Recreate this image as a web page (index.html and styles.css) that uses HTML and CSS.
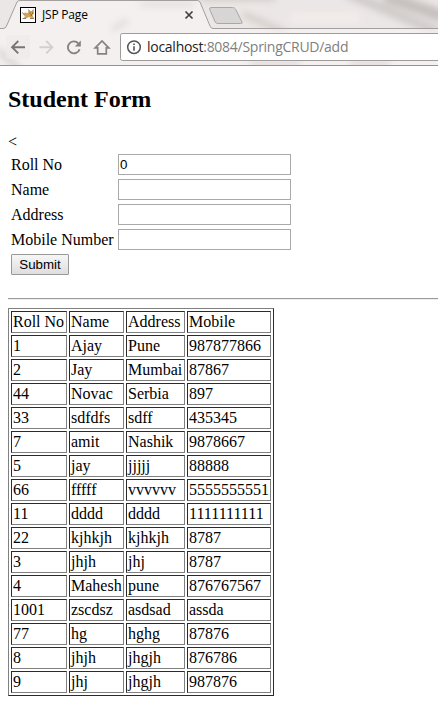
FILE: index.html
```
<!DOCTYPE html>
<html lang="en">
<head>
<meta charset="utf-8">
<title>JSP Page</title>
<link rel="stylesheet" href="styles.css">
</head>
<body>
<header class="browser">
  <svg class="frame" width="438" height="66" viewBox="0 0 438 66" aria-hidden="true">
    <defs>
      <filter id="soft" filterUnits="userSpaceOnUse" x="-20" y="-20" width="480" height="110"><feGaussianBlur stdDeviation="3.500"/></filter>
    </defs>
    <rect width="438" height="66" fill="#ebe7e6"/>
    <g filter="url(#soft)" fill="none">
      <path d="M200 -3H275" stroke="#d0cac7" stroke-width="7"/>
      <path d="M345 -8L438 32" stroke="#cfcbc9" stroke-width="10"/>
      <path d="M385 -4L445 17" stroke="#c5c0be" stroke-width="12"/>
      <path d="M243 14L288 34" stroke="#cfc7c2" stroke-width="5"/>
      <path d="M290 18H360" stroke="#f2ebea" stroke-width="12"/>
    </g>
    <path d="M0 28H4Q6 28 7 26L17 2Q18 .5 20 .5H197Q199 .5 200 2L210 26Q211 28.500 213 28.500H438V66H0Z" fill="#f6f3f2" fill-opacity=".7"/>
    <g filter="url(#soft)" fill="none">
      <path d="M112 30L128 20" stroke="#ded9d9" stroke-width="5"/>
      <path d="M140 4H195" stroke="#e5e0df" stroke-width="6"/>
      <path d="M-2 50L20 70" stroke="#d8d4d3" stroke-width="6"/>
      <path d="M250 64H300M350 64H390" stroke="#ddd6d3" stroke-width="5"/>
    </g>
    <path d="M0 28.500H3Q5.500 28.500 6.500 26L17 2Q18 .5 20 .5H197Q199 .5 200 2L210 26Q211 28.500 213 28.500H438" fill="none" stroke="#a39f9e"/>
    <path d="M211 7.500H232.500Q234.500 7.500 235.500 9L242 22Q243 23.500 240.500 23.500H218Q216 23.500 215.200 22L209.700 9.500Q209 7.500 211 7.500Z" fill="#d8d6d5" stroke="#aaa7a6"/>
    <path d="M0 65.500H438" stroke="#969292"/>
    <rect x="6" y="35" width="24" height="24" rx="2" fill="#ece9e8" fill-opacity=".65"/>
    <rect x="120.500" y="33.500" width="330" height="27" rx="2" fill="#fff" stroke="#9f9b9b"/>
    <g class="favicon">
      <rect x="20.500" y="7.500" width="15" height="15" fill="#fff" stroke="#000"/>
      <path d="M23 14L25 12.500L28 13L28.500 10L30 11H32L33.500 10L34 13.500L32.500 15.500L34 18H31L29 17L26 18.500H23L25 16.500Z" fill="#d6a253"/>
      <path d="M22 12.500L24.500 14.500M22.500 18.500H26M28.500 9.500L29.500 11M33.500 9.500L32.500 11M30 18.500H34" fill="none" stroke="#86827a"/>
      <path d="M29.500 13h1M32 13h1M30.500 15h1.500" stroke="#5d4422"/>
    </g>
    <path d="M185.500 11.500L192.500 18.500M192.500 11.500L185.500 18.500" stroke="#414141" stroke-width="1.700"/>
    <path d="M25 47.200H12.500M18.300 41L12.100 47.200L18.300 53.400" fill="none" stroke="#777575" stroke-width="1.900"/>
    <path d="M39.500 47.200H52M46.200 41L52.400 47.200L46.200 53.400" fill="none" stroke="#d2cfcf" stroke-width="1.900"/>
    <path d="M78.300 43.300A6 6 0 1 0 79.600 49.200" fill="none" stroke="#858282" stroke-width="1.900"/>
    <path d="M80.800 40.500V46.500H74.800Z" fill="#858282"/>
    <path d="M95.200 47.800L102 41L108.800 47.800H106.300V53.800H97.700V47.800Z" fill="none" stroke="#858282" stroke-width="1.700"/>
    <circle cx="134" cy="47.200" r="6.300" fill="none" stroke="#555" stroke-width="1.500"/>
    <path d="M134 46.300V50.700M134 43.500V45.100" stroke="#555" stroke-width="1.600"/>
  </svg>
  <div class="tab">JSP Page</div>
  <div class="address"><span class="host">localhost</span>:8084/SpringCRUD/add</div>
</header>
<main>
  <h2>Student Form</h2>
  &lt;
  <form>
    <table class="fields">
      <tr><td>Roll No</td><td><input type="text" value="0" aria-label="Roll No"></td></tr>
      <tr><td>Name</td><td><input type="text" aria-label="Name"></td></tr>
      <tr><td>Address</td><td><input type="text" aria-label="Address"></td></tr>
      <tr><td>Mobile Number</td><td><input type="text" aria-label="Mobile Number"></td></tr>
      <tr><td colspan="2"><button type="button">Submit</button></td></tr>
    </table>
  </form>
  <hr>
  <table class="students">
    <colgroup><col class="roll"><col class="name"><col class="addr"><col class="mobile"></colgroup>
    <tr><td>Roll No</td><td>Name</td><td>Address</td><td>Mobile</td></tr>
    <tr><td>1</td><td>Ajay</td><td>Pune</td><td>987877866</td></tr>
    <tr><td>2</td><td>Jay</td><td>Mumbai</td><td>87867</td></tr>
    <tr><td>44</td><td>Novac</td><td>Serbia</td><td>897</td></tr>
    <tr><td>33</td><td>sdfdfs</td><td>sdff</td><td>435345</td></tr>
    <tr><td>7</td><td>amit</td><td>Nashik</td><td>9878667</td></tr>
    <tr><td>5</td><td>jay</td><td>jjjjj</td><td>88888</td></tr>
    <tr><td>66</td><td>fffff</td><td>vvvvvv</td><td>5555555551</td></tr>
    <tr><td>11</td><td>dddd</td><td>dddd</td><td>1111111111</td></tr>
    <tr><td>22</td><td>kjhkjh</td><td>kjhkjh</td><td>8787</td></tr>
    <tr><td>3</td><td>jhjh</td><td>jhj</td><td>8787</td></tr>
    <tr><td>4</td><td>Mahesh</td><td>pune</td><td>876767567</td></tr>
    <tr><td>1001</td><td>zscdsz</td><td>asdsad</td><td>assda</td></tr>
    <tr><td>77</td><td>hg</td><td>hghg</td><td>87876</td></tr>
    <tr><td>8</td><td>jhjh</td><td>jhgjh</td><td>876786</td></tr>
    <tr><td>9</td><td>jhj</td><td>jhgjh</td><td>987876</td></tr>
  </table>
</main>
</body>
</html>
```
FILE: styles.css
```
body {
  margin: 0;
  background: #fff;
  color: #000;
  font: 16px/18px "Liberation Serif", serif;
  overflow: hidden;
}
.browser {
  position: relative;
  height: 66px;
  overflow: hidden;
  font-family: "Open Sans", sans-serif;
}
.frame {
  position: absolute;
  left: 0;
  top: 0;
}
.tab {
  position: relative;
  height: 30px;
  padding-left: 42px;
  font-size: 12px;
  line-height: 30px;
  letter-spacing: -0.2px;
}
.address {
  position: relative;
  height: 34px;
  padding-left: 147px;
  font-size: 14px;
  line-height: 34px;
  letter-spacing: -0.27px;
  white-space: nowrap;
  color: #808080;
}
.host { color: #222; }
main { display: flow-root; padding-left: 8px; }
h2 {
  margin: 20px 0;
  font-size: 24px;
  line-height: 27px;
}
form { height: 147px; }
table { border-spacing: 2px; }
td { padding: 1px; }
.fields td { height: 21px; line-height: 18px; }
.fields td:first-child { width: 103px; white-space: nowrap; }
input {
  display: block;
  box-sizing: border-box;
  width: 173px;
  height: 21px;
  margin: 0;
  padding: 1px;
  border: 1px solid #a9a9a9;
  font: 13.33px "Liberation Sans", sans-serif;
}
button {
  display: block;
  box-sizing: border-box;
  width: 58px;
  height: 21px;
  padding: 0;
  border: 1px solid #999;
  border-radius: 1px;
  background: linear-gradient(#f6f6f6, #dedede);
  color: #000;
  font: 13.33px "Liberation Sans", sans-serif;
}
hr {
  height: 1px;
  margin: 0 0 8px;
  border: 0;
  border-top: 1px solid #9a9a9a;
  background: #eee;
}
.students {
  width: 266px;
  table-layout: fixed;
  border: 1px solid;
  border-color: #808080 #2b2b2b #2b2b2b #808080;
}
.students td {
  height: 18px;
  border: 1px solid;
  border-color: #2b2b2b #808080 #808080 #2b2b2b;
  white-space: nowrap;
}
.roll { width: 56px; }
.name { width: 55px; }
.addr { width: 59px; }
.mobile { width: 84px; }
```
